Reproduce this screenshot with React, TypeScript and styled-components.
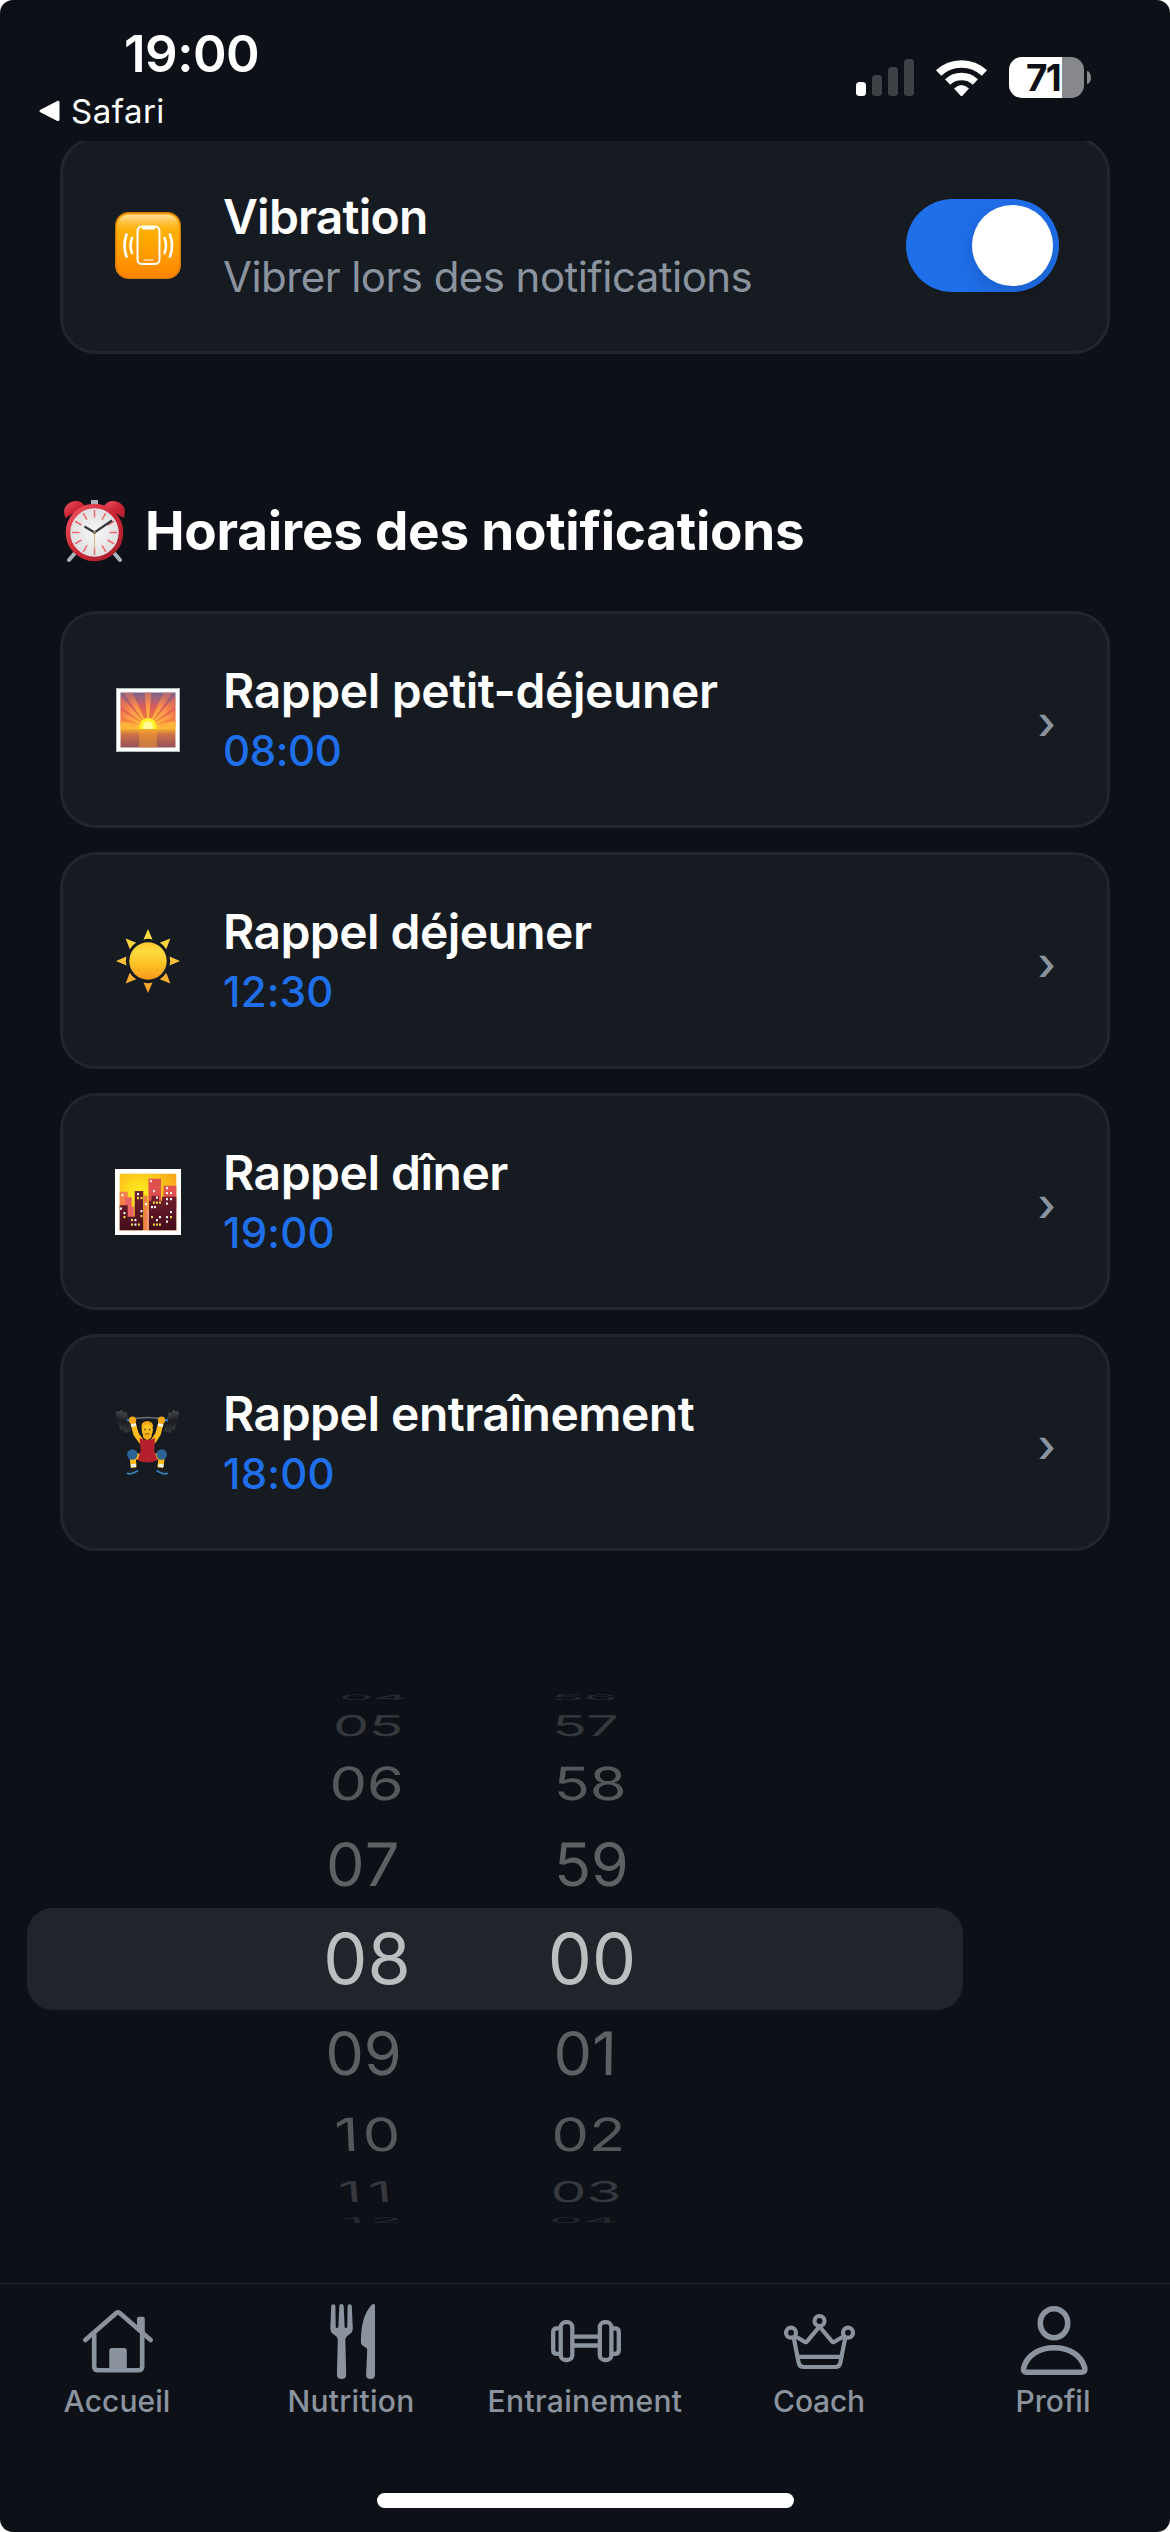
import React from 'react';
import styled, { createGlobalStyle } from 'styled-components';

const color = {
  bg: '#0d1117',
  card: '#161b22',
  line: '#21262d',
  muted: '#8b949e',
  blue: '#1f6feb',
  white: '#ffffff',
};

const GlobalStyle = createGlobalStyle`
  * { box-sizing: border-box; }
  body {
    margin: 0;
    background: #ffffff;
    font-family: Inter, "Liberation Sans", sans-serif;
    color: ${color.white};
  }
`;

const Screen = styled.div`
  width: 1170px;
  height: 2532px;
  display: flex;
  flex-direction: column;
  overflow: hidden;
  background: ${color.bg};
  border-radius: 13px;
`;

/* ---------- status bar ---------- */

const StatusBar = styled.header`
  height: 141px;
  flex: none;
  display: flex;
  justify-content: space-between;
  padding: 0 79px 0 38px;
`;

const StatusLeft = styled.div`
  display: flex;
  flex-direction: column;
`;

const Clock = styled.div`
  margin: 23px 0 0 86px;
  font-size: 51px;
  line-height: 61px;
  font-weight: 600;
  letter-spacing: -0.5px;
`;

const BackLink = styled.div`
  display: flex;
  align-items: center;
  gap: 11px;
  margin-top: 7px;
  font-size: 33px;
  line-height: 40px;
  font-weight: 400;
  letter-spacing: 0.5px;
`;

const StatusRight = styled.div`
  display: flex;
  align-items: center;
  height: 41px;
  margin-top: 57px;
`;

const Signal = styled.div`
  display: flex;
  align-items: flex-end;
  gap: 6px;
  height: 37px;
  margin-right: 22px;
`;

const SignalBar = styled.span<{ $h: number; $on?: boolean }>`
  width: 10px;
  height: ${(p) => p.$h}px;
  border-radius: 3.5px;
  background: ${(p) => (p.$on ? '#ffffff' : '#3d4045')};
`;

const Battery = styled.div`
  display: flex;
  align-items: center;
  gap: 3px;
  margin-left: 22px;
`;

const BatteryBody = styled.div`
  width: 75px;
  height: 41px;
  padding-left: 17px;
  border-radius: 13px;
  background: linear-gradient(90deg, #ffffff 53px, #86888b 53px);
  color: ${color.bg};
  font-size: 37px;
  line-height: 41px;
  font-weight: 700;
  letter-spacing: -1.8px;
`;

const BatteryTip = styled.span`
  width: 4px;
  height: 13px;
  border-radius: 0 4px 4px 0 / 0 6.5px 6.5px 0;
  background: #86888b;
`;

/* ---------- content ---------- */

const Content = styled.main`
  flex: 1;
  min-height: 0;
  overflow: hidden;
  display: flex;
  flex-direction: column;
`;

const CardList = styled.section<{ $clipped?: boolean }>`
  display: flex;
  flex-direction: column;
  flex: none;
  gap: 24px;
  padding: 0 60px;
  margin-top: ${(p) => (p.$clipped ? '-4px' : '0')};
`;

const Card = styled.div`
  height: 217px;
  display: flex;
  align-items: center;
  padding: 0 48px;
  border: 3px solid ${color.line};
  border-radius: 36px;
  background: ${color.card};
`;

const CardIcon = styled.div`
  width: 74px;
  flex: none;
  display: flex;
  justify-content: center;
  margin-right: 38px;
`;

const CardText = styled.div`
  flex: 1;
  padding-top: 2px;
`;

const CardTitle = styled.div<{ $track: number }>`
  font-size: 48px;
  line-height: 60px;
  font-weight: 600;
  letter-spacing: ${(p) => p.$track}px;
`;

const CardSubtitle = styled.div`
  font-size: 42px;
  line-height: 60px;
  letter-spacing: -0.55px;
  color: ${color.muted};
`;

const CardTime = styled.div<{ $track: number }>`
  font-size: 42px;
  line-height: 60px;
  font-weight: 500;
  letter-spacing: ${(p) => p.$track}px;
  color: ${color.blue};
`;

const Chevron = styled.div`
  padding: 4px 3px 0 0;
  font-size: 46px;
  line-height: 60px;
  font-weight: 500;
  color: ${color.muted};
`;

const Toggle = styled.div`
  width: 153px;
  height: 93px;
  padding: 6px;
  display: flex;
  justify-content: flex-end;
  border-radius: 47px;
  background: ${color.blue};
`;

const Knob = styled.span`
  width: 81px;
  height: 81px;
  border-radius: 50%;
  background: #ffffff;
  box-shadow: 0 6px 20px rgba(0, 0, 0, 0.16);
`;

const SectionTitle = styled.h2`
  flex: none;
  display: flex;
  align-items: center;
  height: 257px;
  margin: 0;
  padding: 96px 60px 0;
  gap: 17px;
  font-size: 53px;
  line-height: 64px;
  font-weight: 700;
  letter-spacing: -0.25px;
`;

/* ---------- time picker ---------- */

const Picker = styled.section`
  width: 936px;
  margin: 138px 0 0 27px;
  display: flex;
  flex-direction: column;
  flex: none;
`;

const PickerRow = styled.div<{ $h: number; $size: number; $tone: string; $active?: boolean }>`
  height: ${(p) => p.$h}px;
  padding-left: 227.5px;
  display: grid;
  grid-template-columns: 225px 225px;
  align-items: center;
  justify-items: center;
  border-radius: 26px;
  background: ${(p) => (p.$active ? '#21242b' : 'transparent')};
  color: ${(p) => p.$tone};
  font-size: ${(p) => p.$size}px;
  line-height: ${(p) => p.$h}px;
`;

const Digit = styled.span<{ $dx: number; $sy: number; $skew: number; $track?: number }>`
  letter-spacing: ${(p) => p.$track ?? 0}px;
  transform: translateX(${(p) => p.$dx}px) scaleY(${(p) => p.$sy}) skewX(${(p) => p.$skew}deg);
`;

/* ---------- tab bar ---------- */

const TabBar = styled.nav`
  flex: none;
  height: 210px;
  display: grid;
  grid-template-columns: repeat(5, 1fr);
  border-top: 1px solid ${color.line};
  color: ${color.muted};
`;

const Tab = styled.div<{ $track: number }>`
  display: flex;
  flex-direction: column;
  align-items: center;
  padding-top: 18px;
  font-size: 30px;
  line-height: 36px;
  font-weight: 500;
  letter-spacing: ${(p) => p.$track}px;
`;

const TabIcon = styled.svg`
  display: block;
  width: 84px;
  height: 82px;
  margin-bottom: -1px;
  fill: none;
  stroke: currentColor;
  stroke-linecap: round;
  stroke-linejoin: round;
`;

const HomeIndicator = styled.div`
  flex: none;
  width: 417px;
  height: 15px;
  margin: 0 auto 24px;
  border-radius: 8px;
  background: #ffffff;
`;

/* ---------- drawings ---------- */

const BackArrow = () => (
  <svg width="22" height="22" viewBox="0 0 22 22">
    <path d="M3 11 L20 2.4 V19.6 Z" fill="#fff" stroke="#fff" strokeWidth="3" strokeLinejoin="round" />
  </svg>
);

const Wifi = () => (
  <svg width="51" height="38" viewBox="0 0 51 38">
    <g fill="none" stroke="#fff" strokeWidth="7.6">
      <path d="M2.6 14 A33.5 33.5 0 0 1 48.4 14" />
      <path d="M11.6 23 A20.5 20.5 0 0 1 39.4 23" />
    </g>
    <path d="M18 29.6 Q25.5 22.6 33 29.6 L26.6 36.6 Q25.5 37.6 24.4 36.6 Z" fill="#fff" />
  </svg>
);

const VibrationEmoji = () => (
  <svg width="66" height="67" viewBox="0 0 66 67">
    <defs>
      <linearGradient id="vibBody" x1="0" y1="0" x2="0" y2="1">
        <stop offset="0" stopColor="#ffb92a" />
        <stop offset="0.35" stopColor="#ffad00" />
        <stop offset="1" stopColor="#ff8400" />
      </linearGradient>
      <linearGradient id="vibShine" x1="0" y1="0" x2="0" y2="1">
        <stop offset="0" stopColor="#ffe0a0" />
        <stop offset="1" stopColor="#ffb000" stopOpacity="0" />
      </linearGradient>
    </defs>
    <rect x="0.7" y="0.7" width="64.6" height="65.6" rx="13" fill="url(#vibBody)" stroke="#d87a08" strokeWidth="1.4" />
    <rect x="3" y="3" width="60" height="18" rx="10" fill="url(#vibShine)" />
    <g fill="none" stroke="#fff" strokeLinecap="round">
      <rect x="22.5" y="14.5" width="22" height="37.5" rx="4.5" strokeWidth="2" />
      <path d="M28.5 16 H38.5" strokeWidth="3" />
      <path d="M29 48 H38" strokeWidth="1.2" />
      <path d="M17 26 Q14 33.5 17 41" strokeWidth="2.6" />
      <path d="M11.5 22.5 Q7.5 33.5 11.5 44.5" strokeWidth="2.6" />
      <path d="M49.5 26 Q52.5 33.5 49.5 41" strokeWidth="2.6" />
      <path d="M55 22.5 Q59 33.5 55 44.5" strokeWidth="2.6" />
    </g>
  </svg>
);

const AlarmEmoji = () => (
  <svg width="68" height="66" viewBox="0 0 68 66">
    <defs>
      <linearGradient id="alarmRed" x1="0" y1="0" x2="1" y2="1">
        <stop offset="0" stopColor="#ee5560" />
        <stop offset="0.5" stopColor="#cf2636" />
        <stop offset="1" stopColor="#a51f2b" />
      </linearGradient>
      <radialGradient id="alarmFace">
        <stop offset="0" stopColor="#f8f8f8" />
        <stop offset="1" stopColor="#dddddf" />
      </radialGradient>
    </defs>
    <path d="M15 55 L9 62 M54 55 L60 62" stroke="#a9b3bb" strokeWidth="4" strokeLinecap="round" />
    <path d="M9 8 L14 14 M60 8 L55 14" stroke="#77838c" strokeWidth="4" />
    <rect x="31" y="2" width="7" height="6" fill="#a7b3bd" />
    <path d="M5.5 20 Q1 9 11 4 Q20 0.5 25 8 Z" fill="url(#alarmRed)" />
    <path d="M63.5 20 Q68 9 58 4 Q49 0.5 44 8 Z" fill="url(#alarmRed)" />
    <circle cx="34.5" cy="34.5" r="26.5" fill="url(#alarmFace)" stroke="url(#alarmRed)" strokeWidth="4.6" />
    <g stroke="#ea6a6e" strokeWidth="1.5">
      {Array.from({ length: 12 }, (_, i) => (
        <path key={i} d="M34.5 12 V19.5" transform={`rotate(${i * 30} 34.5 34.5)`} />
      ))}
    </g>
    <path d="M34.5 34.5 V51" stroke="#e0b48a" strokeWidth="1" />
    <path d="M24.5 28.5 L34.5 34.5 L52 22.5" fill="none" stroke="#33383c" strokeWidth="2.2" />
    <circle cx="34.5" cy="34.5" r="1.8" fill="#8b7a60" />
  </svg>
);

const SunriseEmoji = () => (
  <svg width="64" height="64" viewBox="0 0 64 64">
    <defs>
      <linearGradient id="sky" x1="0" y1="0" x2="0" y2="1">
        <stop offset="0" stopColor="#7b638d" />
        <stop offset="0.4" stopColor="#dc5f58" />
        <stop offset="0.75" stopColor="#f57a3a" />
        <stop offset="1" stopColor="#ffd21f" />
      </linearGradient>
      <linearGradient id="sea" x1="0" y1="0" x2="0" y2="1">
        <stop offset="0" stopColor="#f0b030" />
        <stop offset="0.3" stopColor="#cc7048" />
        <stop offset="1" stopColor="#95525c" />
      </linearGradient>
      <linearGradient id="ray" gradientUnits="userSpaceOnUse" x1="0" y1="39" x2="0" y2="2">
        <stop offset="0" stopColor="#ffd63a" />
        <stop offset="0.55" stopColor="#ff9c48" />
        <stop offset="1" stopColor="#f07a58" stopOpacity="0.45" />
      </linearGradient>
      <clipPath id="skyClip"><rect x="4.5" y="4.5" width="55" height="37" /></clipPath>
    </defs>
    <rect x="0.5" y="0.5" width="63" height="63" fill="#fff" stroke="#a9bcbb" />
    <rect x="4.5" y="4.5" width="55" height="37" fill="url(#sky)" />
    <g clipPath="url(#skyClip)">
      {[-82, -64, -47, -30, 0, 30, 47, 64, 82].map((a) => (
        <path key={a} d="M32 39 L27.5 -6 H36.5 Z" fill="url(#ray)" transform={`rotate(${a} 32 39)`} />
      ))}
      <path d="M4 36 Q10 32 15 37 L20 39 V43 H4 Z M60 35 Q54 32 49 37 L44 39 V43 H60 Z" fill="#ffb53a" />
      <circle cx="32" cy="38.5" r="8.5" fill="#fff02c" />
      <circle cx="32" cy="38.5" r="5" fill="#fffb9a" />
    </g>
    <rect x="4.5" y="41" width="55" height="18.5" fill="url(#sea)" />
    <rect x="23" y="41" width="18" height="18.5" fill="#f6a02a" opacity="0.5" />
  </svg>
);

const SunEmoji = () => (
  <svg width="64" height="64" viewBox="0 0 64 64">
    <defs>
      <linearGradient id="sunDisc" x1="0" y1="0" x2="0" y2="1">
        <stop offset="0" stopColor="#fbc632" />
        <stop offset="0.25" stopColor="#fedb3c" />
        <stop offset="0.6" stopColor="#fcc026" />
        <stop offset="1" stopColor="#f8961a" />
      </linearGradient>
      <linearGradient id="sunRays" gradientUnits="userSpaceOnUse" x1="0" y1="0" x2="0" y2="64">
        <stop offset="0" stopColor="#fde045" />
        <stop offset="1" stopColor="#f9a12a" />
      </linearGradient>
    </defs>
    <g fill="url(#sunRays)">
      <path d="M32 0 L36.5 10.5 Q32 9 27.5 10.5 Z" />
      <path d="M54.4 9.6 L50.2 20.2 Q48 16 43.8 13.8 Z" />
      <path d="M64 32 L53.5 36.5 Q55 32 53.5 27.5 Z" />
      <path d="M54.4 54.4 L43.8 50.2 Q48 48 50.2 43.8 Z" />
      <path d="M32 64 L27.5 53.5 Q32 55 36.5 53.5 Z" />
      <path d="M9.6 54.4 L13.8 43.8 Q16 48 20.2 50.2 Z" />
      <path d="M0 32 L10.5 27.5 Q9 32 10.5 36.5 Z" />
      <path d="M9.6 9.6 L20.2 13.8 Q16 16 13.8 20.2 Z" />
    </g>
    <circle cx="32" cy="32" r="18.7" fill="url(#sunDisc)" />
  </svg>
);

const cityWindows: Array<[number, number, string]> = [
  [35, 12, '#ffe6e6'], [38, 22, '#ffe6e6'], [51, 19, '#fff'], [51, 24, '#fff'], [55, 24, '#fff'],
  [6.5, 26, '#fff'], [22, 25, '#fff'], [22, 29, '#f5e04a'], [25.5, 29, '#f5e04a'], [30, 35, '#fff'],
  [5, 39.5, '#fff'], [8.5, 44, '#fff'], [8.5, 48, '#f5e04a'], [25.5, 42, '#fff'], [25.5, 47, '#f5e04a'],
  [16, 51, '#f5e04a'], [19.5, 51, '#fff'], [16, 55.5, '#f5e04a'], [19.5, 55.5, '#fff'], [23, 55.5, '#f5e04a'],
  [41, 28.5, '#fff'], [38, 33.5, '#f5e04a'], [41, 33.5, '#f5e04a'], [44, 33.5, '#f5e04a'],
  [36, 38, '#fff'], [39, 38, '#fff'], [36, 48, '#f5e04a'], [44, 48, '#fff'], [41, 51, '#fff'],
  [38, 55.5, '#f5e04a'], [41, 55.5, '#f5e04a'], [44, 55.5, '#f5e04a'],
  [51, 30, '#fff'], [55, 30, '#fff'], [51, 34.5, '#fff'], [55, 43, '#fff'], [51, 48, '#fff'], [55, 48, '#f5e04a'], [51, 52.5, '#fff'],
];

const CityEmoji = () => (
  <svg width="66" height="66" viewBox="0 0 66 66">
    <defs>
      <radialGradient id="citySky" cx="0.35" cy="0.35" r="0.7">
        <stop offset="0" stopColor="#fff01e" />
        <stop offset="1" stopColor="#f9a51a" />
      </radialGradient>
      <linearGradient id="cityDark" gradientUnits="userSpaceOnUse" x1="0" y1="22" x2="0" y2="62">
        <stop offset="0" stopColor="#7a2230" />
        <stop offset="1" stopColor="#400b19" />
      </linearGradient>
    </defs>
    <rect width="66" height="66" fill="#fff" />
    <rect x="4.7" y="4.7" width="56.6" height="56.6" fill="url(#citySky)" />
    <path d="M33.5 9.7 H46 V40 H33.5 Z M48.5 16.7 H61.3 V40 H48.5 Z" fill="#e0504f" />
    <path d="M4.7 22.7 H12.7 V40 H4.7 Z M29 26.7 H32.5 V61.3 H29 Z" fill="#f38049" />
    <path d="M10 28.3 H16.7 V37.7 H18.8 V61 H10 Z" fill="#e86363" />
    <path d="M32 40 H34 V61.3 H32 Z" fill="#ef9a70" />
    <path
      d="M4.7 36.3 H12.7 V47.7 H19.7 V22 H28.3 V61.3 H4.7 Z M34 31.7 H36.5 V26.7 H44 V31.7 H47 V27.7 H61.3 V61.3 H34 Z"
      fill="url(#cityDark)"
    />
    {cityWindows.map(([x, y, fill], i) => (
      <rect key={i} x={x} y={y - 1} width="1.9" height="2.2" fill={fill} />
    ))}
  </svg>
);

const LifterEmoji = () => (
  <svg width="64" height="68" viewBox="0 0 64 68">
    <defs>
      <linearGradient id="skin" x1="0" y1="0" x2="0" y2="1">
        <stop offset="0" stopColor="#ffcf2e" />
        <stop offset="1" stopColor="#f5ac14" />
      </linearGradient>
      <linearGradient id="plate" x1="0" y1="0" x2="0" y2="1">
        <stop offset="0" stopColor="#45474b" />
        <stop offset="0.5" stopColor="#1b1c1f" />
        <stop offset="1" stopColor="#38393d" />
      </linearGradient>
    </defs>
    <path d="M10 11.5 Q32 5.5 53 11.5" fill="none" stroke="#6b7077" strokeWidth="1.5" />
    <g fill="url(#plate)">
      <rect x="1.8" y="2" width="4" height="19" rx="2" transform="rotate(-14 3.8 11.5)" />
      <rect x="5.4" y="1" width="4.2" height="23" rx="2.1" transform="rotate(-14 7.5 12.5)" />
      <rect x="9.4" y="3" width="3.6" height="20" rx="1.8" transform="rotate(-14 11.2 13)" />
      <rect x="57.2" y="2" width="4" height="19" rx="2" transform="rotate(14 59.2 11.5)" />
      <rect x="53.400" y="1" width="4.2" height="23" rx="2.1" transform="rotate(14 55.5 12.5)" />
      <rect x="50" y="3" width="3.6" height="20" rx="1.8" transform="rotate(14 51.8 13)" />
    </g>
    <path d="M11 11.3 H14 M49 11.3 H52" stroke="#2f6fb5" strokeWidth="2.5" />
    <g fill="none" stroke="#fdbb1e" strokeLinecap="round" strokeLinejoin="round">
      <path d="M17 14 L20 25 L25 32 M45 14 L42 25 L37.5 32" strokeWidth="5.4" />
      <path d="M25 48.5 L16.500 46 L17.500 57 M37 48.5 L46 46 L44.500 57" strokeWidth="6" />
    </g>
    <ellipse cx="16.5" cy="11" rx="3.7" ry="3.5" fill="#f5a51c" />
    <ellipse cx="45.5" cy="11" rx="3.7" ry="3.5" fill="#f5a51c" />
    <path d="M15 16.8 L20 15.5 M47 16.8 L42 15.5" stroke="#f2f4f5" strokeWidth="2.6" />
    <path d="M23.5 29 Q27 31 31.3 31 Q36 31 39 29 L38.3 42 L41.5 51 Q31.3 56 21.5 51 L24.700 42 Z" fill="#b5202d" />
    <path d="M27 28 Q31.3 34 35.600 28 V24 H27 Z" fill="#f6ad18" />
    <ellipse cx="31.3" cy="20.5" rx="5.6" ry="8" fill="url(#skin)" />
    <path d="M25.6 19 Q24.5 12.5 31.3 12 Q38 12.5 37 19 Q35 15.5 31.3 15.5 Q27.5 15.5 25.6 19 Z" fill="#f3a80f" />
    <path d="M28.3 20.5 h1.3 M33 20.5 h1.3" stroke="#4a3312" strokeWidth="1.5" />
    <path d="M29 25.2 Q31.3 24 33.6 25.2" stroke="#9b6a16" strokeWidth="1.3" fill="none" />
    <circle cx="16.3" cy="45.5" r="5.2" fill="#2a6394" />
    <circle cx="45.700" cy="45.5" r="5.2" fill="#2a6394" />
    <path d="M15 56.5 H20 M42.500 56.5 H47.5" stroke="#e9eef1" strokeWidth="3" />
    <path d="M11 63 Q13 58.5 20 58.5 L21.5 61 L18 64.5 Z M51.500 63 Q49.5 58.5 42.5 58.5 L41 61 L44.5 64.5 Z" fill="#1c2026" />
    <path d="M11 64 Q14 66.5 22 61.5 M51.500 64 Q48.5 66.5 40.5 61.5" stroke="#3d82b8" strokeWidth="1.8" fill="none" />
  </svg>
);

const HomeIcon = () => (
  <TabIcon viewBox="75 2302 84 82" strokeWidth="4.6">
    <path d="M85.3 2340 L116.3 2313 Q118 2311.6 119.7 2313 L150.7 2340" />
    <path d="M94.2 2334 V2366.5 Q94.2 2370.3 98 2370.3 H138.4 Q142.2 2370.3 142.2 2366.5 V2334" />
    <path d="M137 2331 V2319 Q137 2316.7 139.3 2316.7 H142.5 Q144.8 2316.7 144.8 2319 V2337 Z" fill="currentColor" stroke="none" />
    <path d="M109.3 2371 V2350.5 Q109.3 2348 111.8 2348 H124.3 Q126.8 2348 126.8 2350.5 V2371 Z" fill="currentColor" stroke="none" />
  </TabIcon>
);

const NutritionIcon = () => (
  <TabIcon viewBox="309 2302 84 82">
    <path
      fill="currentColor"
      stroke="none"
      d="M333.3 2304.2 Q335.4 2304.2 335.4 2306.2 L335.7 2326.5 Q335.8 2328 337 2328 Q338.3 2328 338.4 2326.5 L339.3 2306 Q339.4 2304 341.5 2304 Q343.6 2304 343.7 2306 L344.6 2326.5 Q344.7 2328 346 2328 Q347.2 2328 347.3 2326.5 L347.6 2306.2 Q347.6 2304.2 349.7 2304.2 Q351.7 2304.2 351.8 2306.2 L352.8 2328.5 Q352.8 2332 350 2334 Q345.2 2336.8 345.3 2339.5 L346.2 2374.5 Q346.2 2379 341.5 2379 Q336.9 2379 336.9 2374.5 L337.8 2339.5 Q337.8 2336.8 333.1 2334 Q330.3 2332 330.3 2328.5 L331.2 2306.2 Q331.3 2304.2 333.3 2304.2 Z"
    />
    <path
      fill="currentColor"
      stroke="none"
      d="M375 2306 V2374.5 Q375 2379 370.5 2379 Q366 2379 366.1 2374.5 L367.2 2350 Q367.2 2348.7 366 2347.7 L362.5 2345.4 Q360.9 2344.2 360.9 2342 Q360.6 2317 371.5 2305 Q375 2302.5 375 2306 Z"
    />
  </TabIcon>
);

const TrainingIcon = () => (
  <TabIcon viewBox="543 2302 84 82" strokeWidth="4.3">
    <rect x="560.7" y="2322.2" width="11.6" height="37.8" rx="5" />
    <rect x="599.8" y="2322.2" width="11.6" height="37.8" rx="5" />
    <path d="M560 2328.3 H557 Q553.2 2328.3 553.2 2332 V2350 Q553.2 2353.9 557 2353.9 H560" />
    <path d="M612 2328.3 H615 Q618.8 2328.3 618.8 2332 V2350 Q618.8 2353.9 615 2353.9 H612" />
    <path d="M573 2336.7 H599.5 M573 2345.5 H599.5" />
  </TabIcon>
);

const CoachIcon = () => (
  <TabIcon viewBox="777 2302 84 82" strokeWidth="4.2">
    <circle cx="791" cy="2332.7" r="5" />
    <circle cx="819.5" cy="2321" r="5" />
    <circle cx="848" cy="2332.7" r="5" />
    <path d="M794 2339 L798.6 2362.5 Q799.5 2367 804 2367 H835 Q839.5 2367 840.4 2362.5 L845 2339" />
    <path d="M795.5 2336.5 L804.6 2341.8 Q806.3 2342.7 807.3 2341.2 L819.5 2326.5 L831.7 2341.2 Q832.7 2342.7 834.4 2341.8 L843.5 2336.5" />
    <path d="M798 2356.8 H841" />
  </TabIcon>
);

const ProfileIcon = () => (
  <TabIcon viewBox="1011 2302 84 82" strokeWidth="5.6">
    <ellipse cx="1054" cy="2323.2" rx="13.7" ry="14.5" />
    <path d="M1027 2372.3 Q1023 2372.3 1023.6 2368 C1027 2355 1039 2347.8 1054.2 2347.8 C1069.4 2347.8 1081.4 2355 1084.8 2368 Q1085.4 2372.3 1081.4 2372.3 Z" />
  </TabIcon>
);

/* ---------- data ---------- */

const reminders = [
  { title: 'Rappel petit-déjeuner', time: '08:00', titleTrack: -0.42, timeTrack: -0.4, Icon: SunriseEmoji },
  { title: 'Rappel déjeuner', time: '12:30', titleTrack: -0.58, timeTrack: 0.2, Icon: SunEmoji },
  { title: 'Rappel dîner', time: '19:00', titleTrack: -0.5, timeTrack: 0.2, Icon: CityEmoji },
  { title: 'Rappel entraînement', time: '18:00', titleTrack: -0.5, timeTrack: 0.2, Icon: LifterEmoji },
];

type Face = { text: string; dx: number; track?: number };
type WheelRow = { hour: Face; minute: Face; h: number; size: number; sy: number; tilt: number; tone: string };

const wheel: WheelRow[] = [
  { hour: { text: '04', dx: 6 }, minute: { text: '56', dx: -8 }, h: 17, size: 54, sy: 0.14, tilt: -1.5, tone: '#26292e' },
  { hour: { text: '05', dx: 1 }, minute: { text: '57', dx: -7 }, h: 40, size: 57, sy: 0.5, tilt: -2.5, tone: '#36383d' },
  { hour: { text: '06', dx: -0.5 }, minute: { text: '58', dx: -2.5 }, h: 75, size: 59.5, sy: 0.77, tilt: -2, tone: '#55575b' },
  { hour: { text: '07', dx: -4, track: 1 }, minute: { text: '59', dx: -1 }, h: 87, size: 61, sy: 0.98, tilt: -1.5, tone: '#5f6064' },
  { hour: { text: '08', dx: 0 }, minute: { text: '00', dx: 0 }, h: 102, size: 70, sy: 1, tilt: 0, tone: '#bcbdbf' },
  { hour: { text: '09', dx: -3.5 }, minute: { text: '01', dx: -6.5 }, h: 87, size: 61, sy: 0.98, tilt: 1.5, tone: '#5f6064' },
  { hour: { text: '10', dx: 2.5, track: 4 }, minute: { text: '02', dx: -3.5 }, h: 75, size: 59.5, sy: 0.77, tilt: 2, tone: '#55575b' },
  { hour: { text: '11', dx: 1.5, track: 7 }, minute: { text: '03', dx: -5.5 }, h: 40, size: 57, sy: 0.5, tilt: 2.5, tone: '#36383d' },
  { hour: { text: '12', dx: 8, track: 6 }, minute: { text: '04', dx: -9 }, h: 17, size: 54, sy: 0.14, tilt: 1.5, tone: '#26292e' },
];

const tabs = [
  { label: 'Accueil', track: 0.05, Icon: HomeIcon },
  { label: 'Nutrition', track: 0.3, Icon: NutritionIcon },
  { label: 'Entrainement', track: 0.35, Icon: TrainingIcon },
  { label: 'Coach', track: -0.2, Icon: CoachIcon },
  { label: 'Profil', track: 0, Icon: ProfileIcon },
];

export default function App() {
  return (
    <>
      <GlobalStyle />
      <Screen>
        <StatusBar>
          <StatusLeft>
            <Clock>19:00</Clock>
            <BackLink>
              <BackArrow />
              <span>Safari</span>
            </BackLink>
          </StatusLeft>
          <StatusRight>
            <Signal>
              <SignalBar $h={14} $on />
              <SignalBar $h={21} />
              <SignalBar $h={29} />
              <SignalBar $h={37} />
            </Signal>
            <Wifi />
            <Battery>
              <BatteryBody>71</BatteryBody>
              <BatteryTip />
            </Battery>
          </StatusRight>
        </StatusBar>

        <Content>
          <CardList $clipped>
            <Card>
              <CardIcon><VibrationEmoji /></CardIcon>
              <CardText>
                <CardTitle $track={-0.8}>Vibration</CardTitle>
                <CardSubtitle>Vibrer lors des notifications</CardSubtitle>
              </CardText>
              <Toggle><Knob /></Toggle>
            </Card>
          </CardList>

          <SectionTitle>
            <AlarmEmoji />
            <span>Horaires des notifications</span>
          </SectionTitle>

          <CardList>
            {reminders.map(({ title, time, titleTrack, timeTrack, Icon }) => (
              <Card key={title}>
                <CardIcon><Icon /></CardIcon>
                <CardText>
                  <CardTitle $track={titleTrack}>{title}</CardTitle>
                  <CardTime $track={timeTrack}>{time}</CardTime>
                </CardText>
                <Chevron>›</Chevron>
              </Card>
            ))}
          </CardList>

          <Picker>
            {wheel.map(({ hour, minute, h, size, sy, tilt, tone }) => (
              <PickerRow key={hour.text} $h={h} $size={size} $tone={tone} $active={hour.text === '08'}>
                <Digit $dx={hour.dx} $sy={sy} $skew={tilt} $track={hour.track}>{hour.text}</Digit>
                <Digit $dx={minute.dx} $sy={sy} $skew={-tilt / 2} $track={minute.track}>{minute.text}</Digit>
              </PickerRow>
            ))}
          </Picker>
        </Content>

        <TabBar>
          {tabs.map(({ label, track, Icon }) => (
            <Tab key={label} $track={track}>
              <Icon />
              {label}
            </Tab>
          ))}
        </TabBar>
        <HomeIndicator />
      </Screen>
    </>
  );
}
